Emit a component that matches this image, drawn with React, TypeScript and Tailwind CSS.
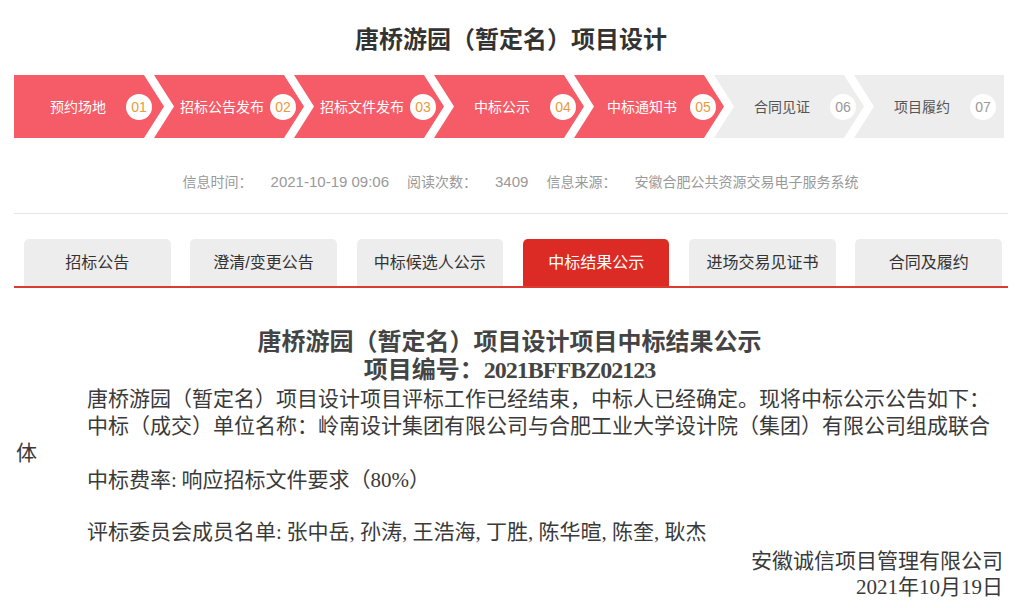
import React from "react";

const steps = [
  { t: "预约场地", n: "01", on: true },
  { t: "招标公告发布", n: "02", on: true },
  { t: "招标文件发布", n: "03", on: true },
  { t: "中标公示", n: "04", on: true },
  { t: "中标通知书", n: "05", on: true },
  { t: "合同见证", n: "06", on: false },
  { t: "项目履约", n: "07", on: false },
];

const tabs = [
  { t: "招标公告", on: false },
  { t: "澄清/变更公告", on: false },
  { t: "中标候选人公示", on: false },
  { t: "中标结果公示", on: true },
  { t: "进场交易见证书", on: false },
  { t: "合同及履约", on: false },
];

const clipFirst = "[clip-path:polygon(0_0,130px_0,150px_50%,130px_100%,0_100%)]";
const clipMid = "[clip-path:polygon(0_0,130px_0,150px_50%,130px_100%,0_100%,20px_50%)]";
const clipLast = "[clip-path:polygon(0_0,100%_0,100%_100%,0_100%,20px_50%)]";

function H({ c }: { c: string }) {
  return <span className="inline-block w-[0.5em] indent-0 text-left">{c}</span>;
}

export default function App() {
  const sans = { fontFamily: '"Liberation Sans", "Noto Sans CJK SC", sans-serif' };
  const serif = { fontFamily: '"Liberation Serif", "Noto Sans CJK SC", serif' };
  return (
    <div className="w-[1028px] h-[608px] overflow-hidden bg-white" style={sans}>
      <div className="ml-[14px] w-[994px] pt-[24px]">
        <h1 className="text-center text-[24px] font-bold leading-[32px] text-[#333]">
          唐桥游园（暂定名）项目设计
        </h1>

        <div className="mt-[19px] flex h-[63px]">
          {steps.map((s, i) => {
            const clip = i === 0 ? clipFirst : i === steps.length - 1 ? clipLast : clipMid;
            return (
              <div
                key={s.n}
                className={`${i === 0 ? "pl-[16px]" : "-ml-[10px] pl-[20px]"} ${clip} flex h-full w-[150px] shrink-0 items-center ${
                  s.on ? "bg-[#f65c67] text-white" : "bg-[#ededed] text-[#555]"
                }`}
              >
                <span className="w-[96px] text-center text-[14px] leading-[20px]">{s.t}</span>
                <span
                  className={`flex h-[26px] w-[26px] items-center justify-center rounded-full bg-white text-[14px] leading-none ${
                    s.on ? "text-[#e89a3c]" : "text-[#999]"
                  }`}
                >
                  {s.n}
                </span>
              </div>
            );
          })}
        </div>

        <div className="mt-[34px] flex h-[20px] items-center justify-center gap-[18px] pl-[19px] text-[14px] leading-[20px] text-[#999]">
          <span>信息时间：</span>
          <span className="text-[15px]">2021-10-19 09:06</span>
          <span>阅读次数：</span>
          <span className="text-[15px]">3409</span>
          <span>信息来源：</span>
          <span>安徽合肥公共资源交易电子服务系统</span>
        </div>

        <div className="mt-[21px] h-px bg-[#e5e5e5]" />

        <div className="mt-[25px] ml-[10px] flex gap-[19.8px]">
          {tabs.map((t) => (
            <div
              key={t.t}
              className={`flex h-[47px] w-[146.5px] items-center justify-center rounded-t-[5px] text-[16px] ${
                t.on ? "bg-[#dc2b24] text-white" : "bg-[#ededed] text-[#333]"
              }`}
            >
              {t.t}
            </div>
          ))}
        </div>
        <div className="h-[2px] bg-[#dc3b32]" />

        <div className="ml-[2px] w-[987px] pt-[40px] text-[#3a3a3a]" style={serif}>
          <div className="text-center text-[24px] font-bold leading-[28px] text-[#444]">
            唐桥游园（暂定名）项目设计项目中标结果公示
          </div>
          <div className="text-center text-[24px] font-bold leading-[28px] text-[#444]">
            项目编号：<span className="tracking-[-1px]">2021BFFBZ02123</span>
          </div>
          <div className="mt-[2px] text-[21px] leading-[27px]">
            <p className="indent-[71px]">唐桥游园（暂定名）项目设计项目评标工作已经结束，中标人已经确定。现将中标公示公告如下：</p>
            <p className="indent-[71px]">中标（成交）单位名称：岭南设计集团有限公司与合肥工业大学设计院（集团）有限公司组成联合体</p>
            <p className="indent-[71px]">
              中标费率<H c=":" />响应招标文件要求（80%）
            </p>
            <p className="h-[25px]" />
            <p className="indent-[71px]">
              评标委员会成员名单<H c=":" />张中岳<H c="," />孙涛<H c="," />王浩海<H c="," />丁胜<H c="," />陈华暄<H c="," />陈奎<H c="," />耿杰
            </p>
            <p className="mt-[2px] text-right">安徽诚信项目管理有限公司</p>
            <p className="text-right leading-[24px]">2021年10月19日</p>
          </div>
        </div>
      </div>
    </div>
  );
}
